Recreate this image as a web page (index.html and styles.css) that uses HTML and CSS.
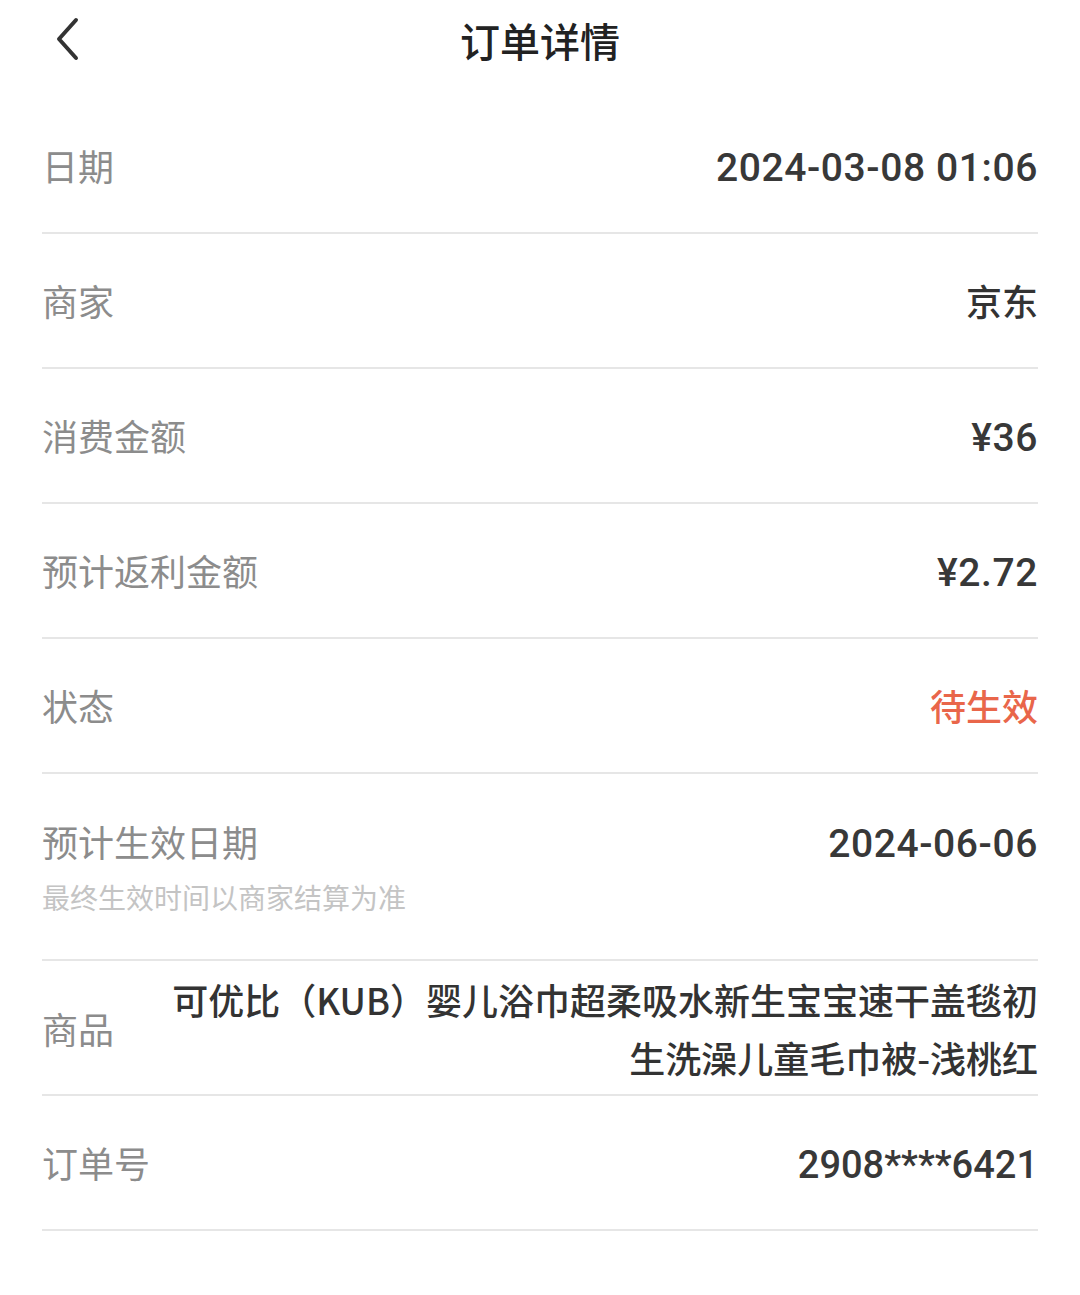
FILE: index.html
```html
<!DOCTYPE html>
<html>
<head>
    <meta charset="utf-8">
    <title>订单详情</title>
    <link rel="stylesheet" href="styles.css">
</head>
<body>
    <div class="header">
        <div class="back">
            <svg width="30" height="44" viewBox="0 0 30 44">
                <path d="M24 3 L7 22 L24 41" fill="none" stroke="#333" stroke-width="4" stroke-linecap="round" stroke-linejoin="round"/>
            </svg>
        </div>
        <div class="title">订单详情</div>
    </div>

    <div class="list">
        <div class="row">
            <div class="label">日期</div>
            <div class="value num">2024-03-08 01:06</div>
        </div>
        <div class="row">
            <div class="label">商家</div>
            <div class="value">京东</div>
        </div>
        <div class="row">
            <div class="label">消费金额</div>
            <div class="value num">¥36</div>
        </div>
        <div class="row">
            <div class="label">预计返利金额</div>
            <div class="value num">¥2.72</div>
        </div>
        <div class="row">
            <div class="label">状态</div>
            <div class="value pending">待生效</div>
        </div>
        <div class="row top">
            <div class="label">
                预计生效日期
                <div class="hint">最终生效时间以商家结算为准</div>
            </div>
            <div class="value num">2024-06-06</div>
        </div>
        <div class="row product">
            <div class="label">商品</div>
            <div class="value">可优比（KUB）婴儿浴巾超柔吸水新生宝宝速干盖毯初生洗澡儿童毛巾被-浅桃红</div>
        </div>
        <div class="row">
            <div class="label">订单号</div>
            <div class="value num order">2908****6421</div>
        </div>
    </div>
</body>
</html>
```

FILE: styles.css
```css
body {
    margin: 0;
    background: #fff;
    font-family: "Noto Sans CJK SC", "Noto Sans", sans-serif;
    color: #333;
}

.header {
    position: relative;
    height: 80px;
    display: flex;
    align-items: center;
    justify-content: center;
}

.back {
    position: absolute;
    left: 52px;
    top: 17px;
    width: 30px;
    height: 44px;
}

.title {
    font-size: 40px;
    font-weight: 500;
    color: #222;
    line-height: 80px;
}

.list {
    margin: 19px 42px 0 42px;
}

.row {
    display: flex;
    justify-content: space-between;
    align-items: center;
    padding: 41px 0 42px 0;
    border-bottom: 2px solid #e6e6e6;
    line-height: 50px;
    font-size: 36px;
}

.row.top {
    align-items: flex-start;
    padding: 42px 0 42px 0;
}

.row.product {
    padding: 9px 0 8px 0;
}

.label {
    color: #8c8c8c;
    flex-shrink: 0;
}

.hint {
    font-size: 28px;
    line-height: 40px;
    color: #c4c4c4;
    margin-top: 11px;
}

.value {
    font-weight: 500;
    color: #333;
    text-align: right;
}

.num {
    font-family: Roboto, "Noto Sans CJK SC", sans-serif;
    font-size: 39px;
    letter-spacing: 0.6px;
    line-height: 44px;
    padding-top: 6px;
    color: #383838;
}

.order {
    letter-spacing: 0;
    font-size: 38px;
}

.product .value {
    line-height: 58px;
    margin-left: 52px;
}

.pending {
    color: #e9664a;
}
```
